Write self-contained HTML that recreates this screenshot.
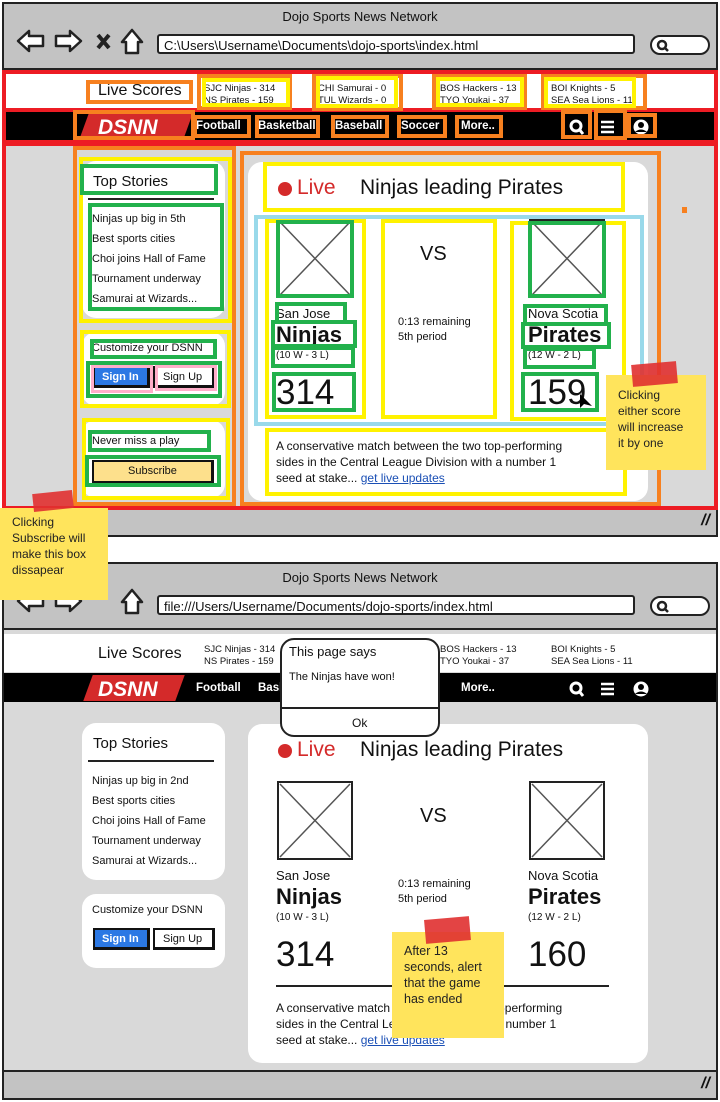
<!DOCTYPE html>
<html><head><meta charset="utf-8"><style>
*{margin:0;padding:0;box-sizing:border-box}
body{width:720px;height:1102px;background:#fff;position:relative;overflow:hidden;font-family:"Liberation Sans",sans-serif;color:#111}
.a{position:absolute}
.t{position:absolute;white-space:nowrap;line-height:1}
.win{position:absolute;left:2px;width:716px;border:2px solid #222;background:#d9d9d9}
.chrome{position:absolute;left:0;right:0;top:0;height:66px;background:#c3c3c3;border-bottom:2px solid #222}
.url{position:absolute;left:153px;top:30px;width:478px;height:20px;background:#fff;border:2px solid #222;border-radius:3px;font-size:13px;padding:2px 0 0 5px}
.pill{position:absolute;left:646px;top:31px;width:60px;height:20px;background:#fff;border:2px solid #222;border-radius:10px}
.bot{position:absolute;left:0;right:0;bottom:0;height:28px;background:#c3c3c3;border-top:2px solid #222}
.card{position:absolute;background:#fff;border-radius:14px}
.b{position:absolute;border-style:solid}
.or{border-color:#f7801f;border-width:4px}
.ye{border-color:#fff200;border-width:4px}
.gr{border-color:#22b14c;border-width:4px}
.bl{border-color:#99d9ea;border-width:4px}
.rd{border-color:#ed1c24;border-width:4px}
.pk{border-color:#ffaec9;border-width:3px}
.note{position:absolute;background:#ffe45c;font-size:12px;line-height:16px;padding:6px 12px;color:#222}
.tape{position:absolute;background:#e03030;opacity:.9}
</style></head><body>

<!-- ============ FRAME 1 ============ -->
<div class="win" style="top:2px;height:535px">
  <div class="chrome">
    <div class="t" style="left:0;width:712px;text-align:center;top:6px;font-size:13px">Dojo Sports News Network</div>
    <svg class="a" style="left:10px;top:22px" width="135" height="30" viewBox="0 0 135 30">
      <path d="M4 15 L15 5 L15 10 L29 10 L29 20 L15 20 L15 25 Z" fill="#fff" stroke="#222" stroke-width="2.5" stroke-linejoin="round"/>
      <path d="M67 15 L56 5 L56 10 L42 10 L42 20 L56 20 L56 25 Z" fill="#fff" stroke="#222" stroke-width="2.5" stroke-linejoin="round"/>
      <path d="M84 9 L95 22 M95 9 L84 22" stroke="#222" stroke-width="4"/>
      <path d="M118 4 L108 16 L112 16 L112 27 L124 27 L124 16 L128 16 Z" fill="#fff" stroke="#222" stroke-width="2.5" stroke-linejoin="round"/>
    </svg>
    <div class="url">C:\Users\Username\Documents\dojo-sports\index.html</div>
    <div class="pill"><svg class="a" style="left:4px;top:2px" width="14" height="14"><circle cx="6" cy="6" r="4" fill="none" stroke="#222" stroke-width="2.5"/><path d="M9 9 L12 12" stroke="#222" stroke-width="2.5"/></svg></div>
  </div>
  <div class="bot"><div class="t" style="right:6px;top:4px;font-size:16px;font-weight:bold;font-style:italic">//</div></div>
</div>

<!-- ============ FRAME 2 ============ -->
<div class="win" style="top:562px;height:538px">
  <div class="chrome">
    <div class="t" style="left:0;width:712px;text-align:center;top:7px;font-size:13px">Dojo Sports News Network</div>
    <svg class="a" style="left:10px;top:22px" width="135" height="30" viewBox="0 0 135 30">
      <path d="M4 15 L15 5 L15 10 L29 10 L29 20 L15 20 L15 25 Z" fill="#fff" stroke="#222" stroke-width="2.5" stroke-linejoin="round"/>
      <path d="M67 15 L56 5 L56 10 L42 10 L42 20 L56 20 L56 25 Z" fill="#fff" stroke="#222" stroke-width="2.5" stroke-linejoin="round"/>
      <path d="M118 4 L108 16 L112 16 L112 27 L124 27 L124 16 L128 16 Z" fill="#fff" stroke="#222" stroke-width="2.5" stroke-linejoin="round"/>
    </svg>
    <div class="url" style="top:31px">file:///Users/Username/Documents/dojo-sports/index.html</div>
    <div class="pill" style="top:32px"><svg class="a" style="left:4px;top:2px" width="14" height="14"><circle cx="6" cy="6" r="4" fill="none" stroke="#222" stroke-width="2.5"/><path d="M9 9 L12 12" stroke="#222" stroke-width="2.5"/></svg></div>
  </div>
  <div class="bot"><div class="t" style="right:6px;top:4px;font-size:16px;font-weight:bold;font-style:italic">//</div></div>
</div>

<!-- Page content template used twice (frame1 top offset 0, frame2 top offset 562) -->
<div class="a" id="p1" style="left:0;top:0;width:720px;height:540px">
  <div class="a" style="left:4px;top:70px;width:712px;height:39px;background:#fff"></div>
  <div class="t" style="left:98px;top:83px;font-size:16px">Live Scores</div>
  <div class="t" style="left:204px;top:83px;font-size:9.5px;line-height:12px">SJC Ninjas - 314<br>NS Pirates - 159</div>
  <div class="t" style="left:318px;top:83px;font-size:9.5px;line-height:12px">CHI Samurai - 0<br>TUL Wizards - 0</div>
  <div class="t" style="left:440px;top:83px;font-size:9.5px;line-height:12px">BOS Hackers - 13<br>TYO Youkai - 37</div>
  <div class="t" style="left:551px;top:83px;font-size:9.5px;line-height:12px">BOI Knights - 5<br>SEA Sea Lions - 11</div>
  <div class="a" style="left:4px;top:112px;width:712px;height:28px;background:#000"></div>
  <div class="a" style="left:84px;top:114px;width:104px;height:25px;background:#d42a2a;transform:skewX(-20deg)"></div>
  <div class="t" style="left:98px;top:117px;font-size:21px;font-weight:bold;font-style:italic;color:#fff">DSNN</div>
  <div class="t" style="left:196px;top:121px;font-size:11.5px;font-weight:bold;color:#fff">Football</div>
  <div class="t" style="left:258px;top:121px;font-size:11.5px;font-weight:bold;color:#fff">Basketball</div>
  <div class="t" style="left:335px;top:121px;font-size:11.5px;font-weight:bold;color:#fff">Baseball</div>
  <div class="t" style="left:401px;top:121px;font-size:11.5px;font-weight:bold;color:#fff">Soccer</div>
  <div class="t" style="left:461px;top:121px;font-size:11.5px;font-weight:bold;color:#fff">More..</div>
  <svg class="a" style="left:567px;top:118px" width="85" height="18">
    <circle cx="9" cy="8" r="5" fill="none" stroke="#fff" stroke-width="3"/><path d="M12 11 L16 16" stroke="#fff" stroke-width="3"/>
    <path d="M34 4 H47 M34 9 H47 M34 14 H47" stroke="#fff" stroke-width="2.5"/>
    <circle cx="74" cy="9" r="7.5" fill="#fff"/><circle cx="74" cy="7" r="3" fill="#000"/><path d="M68 14 Q74 9 80 14" fill="#000"/>
  </svg>

  <div class="card" style="left:82px;top:161px;width:143px;height:157px"></div>
  <div class="t" style="left:93px;top:174px;font-size:15px">Top Stories</div>
  <div class="a" style="left:88px;top:198px;width:126px;height:2px;background:#222"></div>
  <div class="t" style="left:92px;top:209px;font-size:11px;line-height:20px">Ninjas up big in <span class="s5">5th</span><br>Best sports cities<br>Choi joins Hall of Fame<br>Tournament underway<br>Samurai at Wizards...</div>

  <div class="card" style="left:82px;top:332px;width:143px;height:74px"></div>
  <div class="t" style="left:92px;top:343px;font-size:11px">Customize your DSNN</div>
  <div class="a" style="left:93px;top:366px;width:57px;height:22px;background:#2b78e4;border:2px solid #111;border-width:2px 3px 3px 2px"></div>
  <div class="t" style="left:102px;top:372px;font-size:11px;color:#fff;font-weight:bold">Sign In</div>
  <div class="a" style="left:153px;top:366px;width:62px;height:22px;background:#fff;border:2px solid #111;border-width:2px 3px 3px 2px"></div>
  <div class="t" style="left:163px;top:372px;font-size:11px">Sign Up</div>

  <div class="card" style="left:248px;top:162px;width:400px;height:339px"></div>
  <div class="a" style="left:278px;top:182px;width:14px;height:14px;border-radius:50%;background:#d42a2a"></div>
  <div class="t" style="left:297px;top:177px;font-size:21px;color:#d42a2a">Live</div>
  <div class="t" style="left:360px;top:177px;font-size:21px">Ninjas leading Pirates</div>
  <svg class="a" style="left:277px;top:219px" width="76" height="79"><rect x="1" y="1" width="74" height="77" fill="#fff" stroke="#222" stroke-width="2"/><path d="M3 3 L73 76 M73 3 L3 76" stroke="#555" stroke-width="1.5"/></svg>
  <svg class="a" style="left:529px;top:219px" width="76" height="79"><rect x="1" y="1" width="74" height="77" fill="#fff" stroke="#222" stroke-width="2"/><path d="M3 3 L73 76 M73 3 L3 76" stroke="#555" stroke-width="1.5"/></svg>
  <div class="t" style="left:420px;top:244px;font-size:20px">VS</div>
  <div class="t" style="left:276px;top:307px;font-size:13px">San Jose</div>
  <div class="t" style="left:276px;top:324px;font-size:22px;font-weight:bold">Ninjas</div>
  <div class="t" style="left:276px;top:351px;font-size:10px">(10 W - 3 L)</div>
  <div class="t" style="left:276px;top:375px;font-size:35px">314</div>
  <div class="t" style="left:398px;top:315px;font-size:11px;line-height:15px">0:13 remaining<br>5th period</div>
  <div class="t" style="left:528px;top:307px;font-size:13px">Nova Scotia</div>
  <div class="t" style="left:528px;top:324px;font-size:22px;font-weight:bold">Pirates</div>
  <div class="t" style="left:528px;top:351px;font-size:10px">(12 W - 2 L)</div>
  <div class="t sc" style="left:528px;top:375px;font-size:35px">159</div>
  <div class="a hr" style="left:276px;top:423px;width:333px;height:2px;background:#222"></div>
  <div class="t" style="left:276px;top:438px;font-size:12px;line-height:16px">A conservative match between the two top-performing<br>sides in the Central League Division with a number 1<br>seed at stake... <span style="color:#1a4fb5;text-decoration:underline">get live updates</span></div>
</div>

<!-- frame1 extra subscribe card -->
<div class="card" style="left:82px;top:420px;width:143px;height:78px"></div>
<div class="t" style="left:92px;top:436px;font-size:11px">Never miss a play</div>
<div class="a" style="left:92px;top:460px;width:122px;height:24px;background:#fde08c;border:2px solid #111;border-width:2px 3px 3px 2px"></div>
<div class="t" style="left:128px;top:466px;font-size:11px">Subscribe</div>

<!-- frame1 annotation overlays -->
<div class="b rd" style="left:2px;top:70px;width:716px;height:440px;border-width:4px"></div>
<div class="a" style="left:2px;top:108px;width:716px;height:4px;background:#ed1c24"></div>
<div class="a" style="left:2px;top:140px;width:716px;height:6px;background:#ed1c24"></div>
<div class="b or" style="left:86px;top:80px;width:107px;height:24px"></div>
<div class="b or" style="left:197px;top:74px;width:95px;height:36px"></div>
<div class="b ye" style="left:202px;top:78px;width:88px;height:29px"></div>
<div class="b or" style="left:312px;top:74px;width:91px;height:37px"></div>
<div class="b ye" style="left:316px;top:76px;width:82px;height:32px"></div>
<div class="b or" style="left:432px;top:74px;width:95px;height:36px"></div>
<div class="b ye" style="left:436px;top:77px;width:88px;height:30px"></div>
<div class="b or" style="left:541px;top:74px;width:106px;height:36px"></div>
<div class="b ye" style="left:544px;top:77px;width:92px;height:31px"></div>
<div class="b or" style="left:73px;top:110px;width:122px;height:30px"></div>
<div class="b or" style="left:193px;top:115px;width:58px;height:23px"></div>
<div class="b or" style="left:255px;top:115px;width:65px;height:23px"></div>
<div class="b or" style="left:331px;top:115px;width:58px;height:23px"></div>
<div class="b or" style="left:397px;top:115px;width:50px;height:23px"></div>
<div class="b or" style="left:455px;top:115px;width:48px;height:23px"></div>
<div class="b or" style="left:561px;top:110px;width:31px;height:29px"></div>
<div class="b or" style="left:594px;top:109px;width:33px;height:31px"></div>
<div class="b or" style="left:627px;top:113px;width:30px;height:25px"></div>

<div class="b or" style="left:73px;top:146px;width:163px;height:360px"></div>
<div class="b ye" style="left:79px;top:157px;width:153px;height:166px"></div>
<div class="b gr" style="left:80px;top:164px;width:138px;height:31px"></div>
<div class="b gr" style="left:88px;top:203px;width:136px;height:108px"></div>
<div class="b ye" style="left:80px;top:330px;width:151px;height:78px"></div>
<div class="b gr" style="left:90px;top:339px;width:127px;height:20px"></div>
<div class="b gr" style="left:86px;top:361px;width:136px;height:37px"></div>
<div class="b pk" style="left:91px;top:365px;width:62px;height:28px"></div>
<div class="b pk" style="left:155px;top:365px;width:62px;height:26px"></div>
<div class="b ye" style="left:82px;top:418px;width:148px;height:82px"></div>
<div class="b gr" style="left:88px;top:430px;width:123px;height:22px"></div>
<div class="b gr" style="left:85px;top:455px;width:136px;height:32px"></div>

<div class="b or" style="left:240px;top:151px;width:421px;height:355px"></div>
<div class="b ye" style="left:263px;top:162px;width:362px;height:50px"></div>
<div class="b bl" style="left:254px;top:215px;width:390px;height:211px"></div>
<div class="b ye" style="left:265px;top:219px;width:101px;height:200px"></div>
<div class="b ye" style="left:381px;top:219px;width:116px;height:200px"></div>
<div class="b ye" style="left:510px;top:221px;width:116px;height:200px"></div>
<div class="b gr" style="left:276px;top:220px;width:78px;height:78px"></div>
<div class="b gr" style="left:528px;top:221px;width:78px;height:77px"></div>
<div class="b gr" style="left:275px;top:302px;width:72px;height:22px"></div>
<div class="b gr" style="left:271px;top:320px;width:86px;height:28px"></div>
<div class="b gr" style="left:271px;top:346px;width:84px;height:22px"></div>
<div class="b gr" style="left:272px;top:372px;width:84px;height:40px"></div>
<div class="b gr" style="left:523px;top:304px;width:85px;height:22px"></div>
<div class="b gr" style="left:521px;top:322px;width:90px;height:27px"></div>
<div class="b gr" style="left:523px;top:347px;width:73px;height:22px"></div>
<div class="b gr" style="left:521px;top:372px;width:78px;height:40px"></div>
<div class="b ye" style="left:265px;top:428px;width:362px;height:68px"></div>
<div class="a" style="left:682px;top:207px;width:5px;height:6px;background:#f7801f"></div>
<svg class="a" style="left:578px;top:392px" width="16" height="20"><path d="M2 2 L2 16 L6 12 L14 14 Z" fill="#000"/></svg>

<!-- Frame 2 copy -->
<div class="a" style="left:0;top:562px;width:720px;height:540px">
  <div class="a" style="left:4px;top:72px;width:712px;height:38px;background:#fff"></div>
  <div class="t" style="left:98px;top:84px;font-size:16px">Live Scores</div>
  <div class="t" style="left:204px;top:82px;font-size:9.5px;line-height:12px">SJC Ninjas - 314<br>NS Pirates - 159</div>
  <div class="t" style="left:440px;top:82px;font-size:9.5px;line-height:12px">BOS Hackers - 13<br>TYO Youkai - 37</div>
  <div class="t" style="left:551px;top:82px;font-size:9.5px;line-height:12px">BOI Knights - 5<br>SEA Sea Lions - 11</div>
  <div class="a" style="left:4px;top:111px;width:712px;height:29px;background:#000"></div>
  <div class="a" style="left:88px;top:113px;width:92px;height:26px;background:#d42a2a;transform:skewX(-20deg)"></div>
  <div class="t" style="left:98px;top:117px;font-size:21px;font-weight:bold;font-style:italic;color:#fff">DSNN</div>
  <div class="t" style="left:196px;top:121px;font-size:11.5px;font-weight:bold;color:#fff">Football</div>
  <div class="t" style="left:258px;top:121px;font-size:11.5px;font-weight:bold;color:#fff">Basketball</div>
  <div class="t" style="left:461px;top:121px;font-size:11.5px;font-weight:bold;color:#fff">More..</div>
  <svg class="a" style="left:567px;top:118px" width="85" height="18">
    <circle cx="9" cy="8" r="5" fill="none" stroke="#fff" stroke-width="3"/><path d="M12 11 L16 16" stroke="#fff" stroke-width="3"/>
    <path d="M34 4 H47 M34 9 H47 M34 14 H47" stroke="#fff" stroke-width="2.5"/>
    <circle cx="74" cy="9" r="7.5" fill="#fff"/><circle cx="74" cy="7" r="3" fill="#000"/><path d="M68 14 Q74 9 80 14" fill="#000"/>
  </svg>

  <div class="card" style="left:82px;top:161px;width:143px;height:157px"></div>
  <div class="t" style="left:93px;top:174px;font-size:15px">Top Stories</div>
  <div class="a" style="left:88px;top:198px;width:126px;height:2px;background:#222"></div>
  <div class="t" style="left:92px;top:209px;font-size:11px;line-height:20px">Ninjas up big in 2nd<br>Best sports cities<br>Choi joins Hall of Fame<br>Tournament underway<br>Samurai at Wizards...</div>

  <div class="card" style="left:82px;top:332px;width:143px;height:74px"></div>
  <div class="t" style="left:92px;top:343px;font-size:11px">Customize your DSNN</div>
  <div class="a" style="left:93px;top:366px;width:57px;height:22px;background:#2b78e4;border:2px solid #111;border-width:2px 3px 3px 2px"></div>
  <div class="t" style="left:102px;top:372px;font-size:11px;color:#fff;font-weight:bold">Sign In</div>
  <div class="a" style="left:153px;top:366px;width:62px;height:22px;background:#fff;border:2px solid #111;border-width:2px 3px 3px 2px"></div>
  <div class="t" style="left:163px;top:372px;font-size:11px">Sign Up</div>

  <div class="card" style="left:248px;top:162px;width:400px;height:339px"></div>
  <div class="a" style="left:278px;top:182px;width:14px;height:14px;border-radius:50%;background:#d42a2a"></div>
  <div class="t" style="left:297px;top:177px;font-size:21px;color:#d42a2a">Live</div>
  <div class="t" style="left:360px;top:177px;font-size:21px">Ninjas leading Pirates</div>
  <svg class="a" style="left:277px;top:219px" width="76" height="79"><rect x="1" y="1" width="74" height="77" fill="#fff" stroke="#222" stroke-width="2"/><path d="M3 3 L73 76 M73 3 L3 76" stroke="#555" stroke-width="1.5"/></svg>
  <svg class="a" style="left:529px;top:219px" width="76" height="79"><rect x="1" y="1" width="74" height="77" fill="#fff" stroke="#222" stroke-width="2"/><path d="M3 3 L73 76 M73 3 L3 76" stroke="#555" stroke-width="1.5"/></svg>
  <div class="t" style="left:420px;top:244px;font-size:20px">VS</div>
  <div class="t" style="left:276px;top:307px;font-size:13px">San Jose</div>
  <div class="t" style="left:276px;top:324px;font-size:22px;font-weight:bold">Ninjas</div>
  <div class="t" style="left:276px;top:351px;font-size:10px">(10 W - 3 L)</div>
  <div class="t" style="left:276px;top:375px;font-size:35px">314</div>
  <div class="t" style="left:398px;top:315px;font-size:11px;line-height:15px">0:13 remaining<br>5th period</div>
  <div class="t" style="left:528px;top:307px;font-size:13px">Nova Scotia</div>
  <div class="t" style="left:528px;top:324px;font-size:22px;font-weight:bold">Pirates</div>
  <div class="t" style="left:528px;top:351px;font-size:10px">(12 W - 2 L)</div>
  <div class="t" style="left:528px;top:375px;font-size:35px">160</div>
  <div class="a" style="left:276px;top:423px;width:333px;height:2px;background:#222"></div>
  <div class="t" style="left:276px;top:438px;font-size:12px;line-height:16px">A conservative match between the two top-performing<br>sides in the Central League Division with a number 1<br>seed at stake... <span style="color:#1a4fb5;text-decoration:underline">get live updates</span></div>
</div>

<!-- dialog -->
<div class="a" style="left:280px;top:638px;width:160px;height:99px;background:#fff;border:2px solid #222;border-radius:14px"></div>
<div class="t" style="left:289px;top:645px;font-size:13px">This page says</div>
<div class="t" style="left:289px;top:672px;font-size:11px">The Ninjas have won!</div>
<div class="a" style="left:281px;top:707px;width:158px;height:2px;background:#222"></div>
<div class="t" style="left:352px;top:717px;font-size:12px">Ok</div>

<!-- sticky notes -->
<div class="note" style="left:0;top:508px;width:108px;height:92px;padding:6px 12px">Clicking<br>Subscribe will<br>make this box<br>dissapear</div>
<div class="tape" style="left:33px;top:492px;width:40px;height:18px;transform:rotate(-6deg)"></div>
<div class="note" style="left:606px;top:375px;width:100px;height:95px;padding:12px 12px">Clicking<br>either score<br>will increase<br>it by one</div>
<div class="tape" style="left:632px;top:363px;width:45px;height:22px;transform:rotate(-5deg)"></div>
<div class="note" style="left:392px;top:932px;width:112px;height:106px;padding:11px 12px;font-size:12.5px">After 13<br>seconds, alert<br>that the game<br>has ended</div>
<div class="tape" style="left:425px;top:918px;width:45px;height:24px;transform:rotate(-5deg)"></div>

</body></html>
